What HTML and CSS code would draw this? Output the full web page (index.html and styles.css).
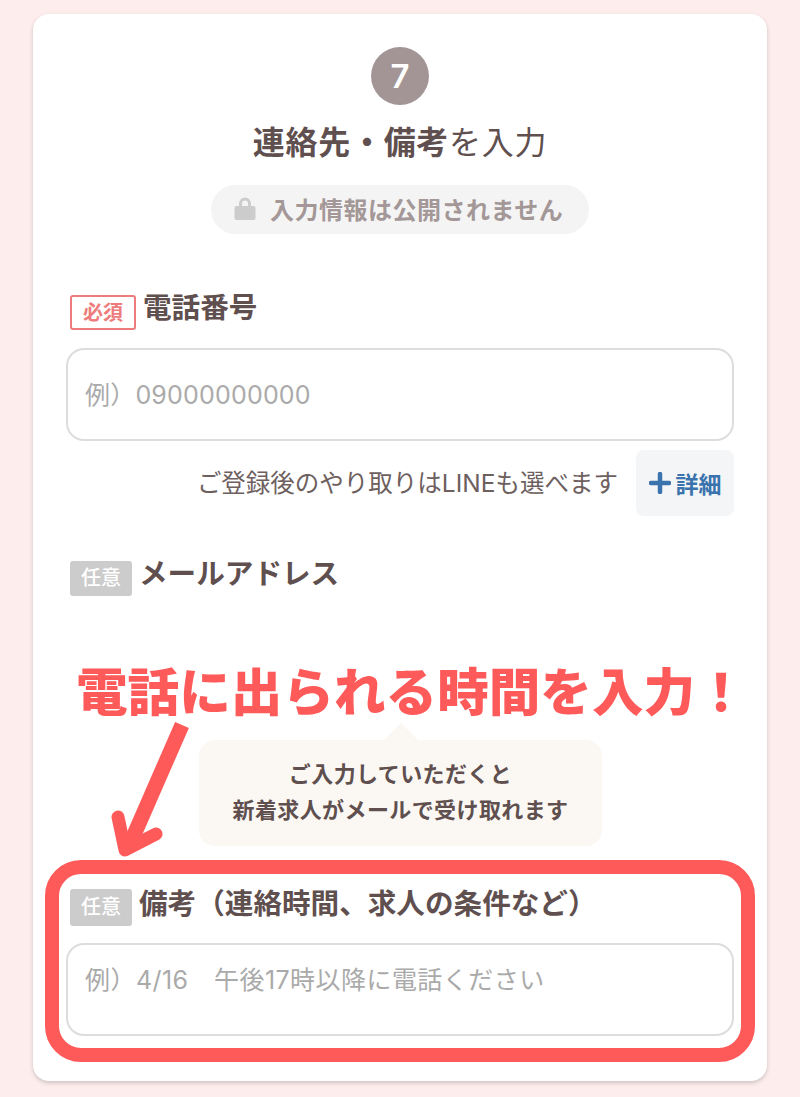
FILE: index.html
```html
<!DOCTYPE html>
<html lang="ja">
<head>
<meta charset="utf-8">
<title>連絡先・備考を入力</title>
<link rel="stylesheet" href="styles.css">
</head>
<body>
<main class="card">
  <div class="step">7</div>
  <h1 class="title"><b>連絡先・備考</b>を入力</h1>
  <div class="notice-wrap">
    <p class="notice">
      <svg class="lock" viewBox="0 0 22 24" aria-hidden="true"><path d="M5 11V7.500a6 6 0 0 1 12 0V11h-3V7.500a3 3 0 0 0-6 0V11z"/><rect x="0.500" y="10" width="21" height="14" rx="2"/></svg>
      入力情報は公開されません
    </p>
  </div>

  <section class="field field-phone">
    <div class="label-row"><span class="badge badge-req">必須</span><label class="label" for="tel">電話番号</label></div>
    <input class="input tel" id="tel" type="text" placeholder="例）09000000000">
    <div class="note-row">
      <span class="note">ご登録後のやり取りはLINEも選べます</span>
      <button class="detail" type="button">
        <svg class="plus" viewBox="0 0 22 22" aria-hidden="true"><path d="M11 2v18M2 11h18"/></svg>詳細
      </button>
    </div>
  </section>

  <section class="field field-mail">
    <div class="label-row"><span class="badge badge-opt">任意</span><span class="label">メールアドレス</span></div>
    <div class="tip">ご入力していただくと<br>新着求人がメールで受け取れます</div>
  </section>

  <section class="field field-memo">
    <div class="label-row"><span class="badge badge-opt">任意</span><label class="label" for="memo">備考（連絡時間、求人の条件など）</label></div>
    <textarea class="input memo" id="memo" placeholder="例）4/16　午後17時以降に電話ください"></textarea>
  </section>

  <p class="callout">電話に出られる時間を入力！</p>
  <svg class="arrow" viewBox="0 0 100 150" aria-hidden="true"><path class="arrow-shaft" d="M71 3 19 122"/><path class="arrow-head" d="M7 95 14 128 45 112"/></svg>
  <div class="highlight"></div>
</main>
</body>
</html>
```
FILE: styles.css
```css
* { box-sizing: border-box; }
html, body { margin: 0; padding: 0; }
body {
  height: 1097px;
  background: #fdeded;
  color: #5f4f4f;
  font-family: "Inter", "Noto Sans CJK JP", sans-serif;
  overflow: hidden;
}
.card {
  position: relative;
  width: 734px;
  height: 1067px;
  margin: 14px 33px 0;
  padding: 33px 33px 0;
  background: #fff;
  border-radius: 16px;
  box-shadow: 0 2px 4px rgba(0, 0, 0, .18);
}
.step {
  width: 58px;
  height: 58px;
  margin: 0 auto;
  border-radius: 50%;
  background: #a39595;
  color: #fff;
  font: 600 33px/58px "Inter", sans-serif;
  text-align: center;
}
.title {
  margin: 15px 0 0;
  height: 45px;
  font-size: 32px;
  line-height: 45px;
  font-weight: 400;
  letter-spacing: .7px;
  text-align: center;
}
.title b { font-weight: 700; }
.notice-wrap { display: flex; justify-content: center; margin-top: 20px; }
.notice {
  display: flex;
  align-items: center;
  gap: 14px;
  width: 378px;
  height: 49px;
  margin: 0;
  padding: 0 0 3px 23px;
  border-radius: 25px;
  background: #f4f4f4;
  color: #a39797;
  font-size: 24px;
  font-weight: 700;
  letter-spacing: .5px;
  white-space: nowrap;
}
.lock { width: 22px; height: 24px; fill: #ccc; flex: none; }
.field-phone { margin-top: 61px; }
.field-mail { margin-top: 45px; }
.field-memo { margin-top: 43px; }
.label-row {
  display: flex;
  align-items: flex-start;
  gap: 7px;
  height: 35px;
  margin-left: 4px;
}
.field-memo .label-row { height: 36px; }
.field-memo .badge { height: 37px; }
.field-memo .label { padding-top: 2px; }
.badge {
  flex: none;
  display: flex;
  align-items: center;
  justify-content: center;
  height: 35px;
  padding-bottom: 5px;
  border-radius: 3px;
  font-size: 20px;
  font-weight: 500;
}
.badge-req {
  width: 66px;
  padding-bottom: 3px;
  border: 2.500px solid #ee7c7c;
  color: #ee7c7c;
  font-weight: 700;
}
.badge-opt {
  width: 62px;
  background: #ccc;
  color: #fff;
}
.label {
  font-size: 28.600px;
  line-height: 26px;
  font-weight: 700;
  white-space: nowrap;
}
.input {
  display: block;
  width: 668px;
  height: 93px;
  margin-top: 18px;
  padding: 0 17px;
  border: 2.500px solid #ddd;
  border-radius: 18px;
  background: #fff;
  font-family: inherit;
  font-size: 25px;
  color: #5f4f4f;
  outline: none;
  resize: none;
}
.input::placeholder { color: #aaa; opacity: 1; }
.tel { letter-spacing: .2px; }
.memo { padding-top: 17px; line-height: 36px; letter-spacing: .45px; overflow: hidden; }
.note-row {
  display: flex;
  justify-content: flex-end;
  align-items: center;
  gap: 18px;
  margin-top: 9px;
}
.note { font-size: 24.500px; color: #6e5f5f; white-space: nowrap; padding-bottom: 3px; }
.detail {
  display: flex;
  align-items: center;
  justify-content: center;
  gap: 5px;
  width: 98px;
  height: 66px;
  padding: 0;
  border: 0;
  border-radius: 8px;
  background: #f4f5f6;
  color: #3a73ad;
  font-family: inherit;
  font-size: 23px;
  font-weight: 700;
}
.plus { width: 22px; height: 22px; fill: none; stroke: #3a73ad; stroke-width: 4.500; stroke-linecap: round; }
.tip {
  position: relative;
  width: 403px;
  height: 106px;
  margin: 144px 0 0 133px;
  padding-top: 16px;
  border-radius: 16px;
  background: #fbf8f3;
  color: #5f4f4f;
  font-size: 22px;
  line-height: 36px;
  font-weight: 700;
  letter-spacing: .4px;
  text-align: center;
}
.tip::before {
  content: "";
  position: absolute;
  left: 190px;
  top: -12px;
  width: 24px;
  height: 24px;
  background: #fbf8f3;
  transform: rotate(45deg);
}
.callout {
  position: absolute;
  left: 43px;
  top: 643px;
  margin: 0;
  color: #ff5a5a;
  font-size: 51.600px;
  line-height: 70px;
  font-weight: 900;
  white-space: nowrap;
}
.arrow {
  position: absolute;
  left: 78px;
  top: 708px;
  width: 100px;
  height: 150px;
  fill: none;
  stroke: #ff5a5a;
}
.arrow-shaft { stroke-width: 15; }
.arrow-head { stroke-width: 13; stroke-linecap: round; stroke-linejoin: round; }
.highlight {
  position: absolute;
  left: 12px;
  top: 846px;
  width: 710px;
  height: 202px;
  border: 14px solid #ff5a5a;
  border-radius: 36px;
  pointer-events: none;
}
```
